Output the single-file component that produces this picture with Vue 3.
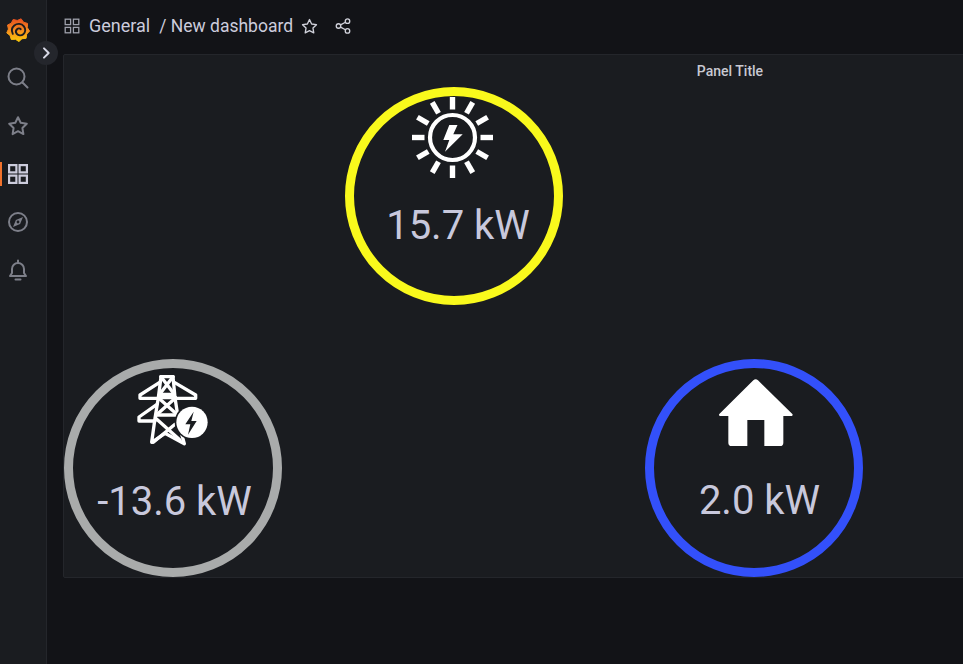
<template>
  <div class="app">
    <aside class="sidebar">
      <svg class="logo" viewBox="0 0 24 24" width="24" height="24">
        <defs>
          <linearGradient id="logoGrad" x1="0" y1="1" x2="0" y2="0">
            <stop offset="0" stop-color="#fbca0a" />
            <stop offset="0.55" stop-color="#f5851f" />
            <stop offset="1" stop-color="#e8501f" />
          </linearGradient>
        </defs>
        <polygon fill="url(#logoGrad)" stroke="url(#logoGrad)" stroke-width="1" stroke-linejoin="round" :points="logoPoints" />
        <path fill="none" stroke="#1d1c20" stroke-width="1.900" stroke-linecap="round" d="M6.800 15.800c-1.400-2.800-.9-6.300 1.500-8.300 2.900-2.500 7.300-2.100 9.600.8 2 2.500 1.700 6.100-.6 8-2 1.700-5 1.400-6.500-.5-1.200-1.500-1-3.600.4-4.800 1-.9 2.700-.8 3.500.2" />
      </svg>
      <nav class="nav">
        <button class="nav-item">
          <svg viewBox="0 0 24 24" width="24" height="24" fill="none" stroke="currentColor" stroke-width="2"><circle cx="10.500" cy="10.500" r="8" /><path d="m16.500 16.500 5 5" stroke-linecap="round" /></svg>
        </button>
        <button class="nav-item">
          <svg viewBox="0 0 24 24" width="24" height="24" fill="none" stroke="currentColor" stroke-width="2" stroke-linejoin="round"><path d="m12 3.200 2.700 5.600 6.100.9-4.400 4.300 1 6.100-5.400-2.900-5.400 2.900 1-6.100-4.400-4.300 6.100-.9z" /></svg>
        </button>
        <button class="nav-item active">
          <svg viewBox="0 0 24 24" width="24" height="24" fill="none" stroke="currentColor" stroke-width="2.200"><rect x="3.100" y="3.100" width="7.300" height="7.300" /><rect x="13.600" y="3.100" width="7.300" height="7.300" /><rect x="3.100" y="13.600" width="7.300" height="7.300" /><rect x="13.600" y="13.600" width="7.300" height="7.300" /></svg>
        </button>
        <button class="nav-item">
          <svg viewBox="0 0 24 24" width="24" height="24" fill="none" stroke="currentColor" stroke-width="2"><circle cx="12" cy="12" r="9" /><path fill="currentColor" stroke="none" d="m17 7-2.900 7.100L7 17l2.900-7.100zm-5 3.600a1.400 1.400 0 1 0 0 2.800 1.400 1.400 0 0 0 0-2.800z" fill-rule="evenodd" /></svg>
        </button>
        <button class="nav-item">
          <svg viewBox="0 0 24 24" width="24" height="24" fill="none" stroke="currentColor" stroke-width="2" stroke-linejoin="round" stroke-linecap="round"><path d="M6 15V11a6 6 0 0 1 12 0v4l2 3H4z" /><path d="M12 2.500V5M9.500 21.500h5" /></svg>
        </button>
      </nav>
    </aside>

    <button class="expand">
      <svg viewBox="0 0 24 24" width="16" height="16" fill="none" stroke="#d8d9e6" stroke-width="3" stroke-linecap="round" stroke-linejoin="round"><path d="m9 5 7 7-7 7" /></svg>
    </button>

    <main class="main">
      <header class="topbar">
        <svg class="crumb-icon" viewBox="0 0 16 16" width="16" height="16" fill="none" stroke="#9fa1ac" stroke-width="1.300"><rect x="1.200" y="1.200" width="5.400" height="5.400" /><rect x="9.400" y="1.200" width="5.400" height="5.400" /><rect x="1.200" y="9.400" width="5.400" height="5.400" /><rect x="9.400" y="9.400" width="5.400" height="5.400" /></svg>
        <span class="crumb">General</span>
        <span class="crumb crumb-last">/ New dashboard</span>
        <svg class="star" viewBox="0 0 24 24" width="19" height="19" fill="none" stroke="#d0d1da" stroke-width="1.700" stroke-linejoin="round"><path d="m12 3.200 2.700 5.600 6.100.9-4.400 4.300 1 6.100-5.400-2.900-5.400 2.900 1-6.100-4.400-4.300 6.100-.9z" /></svg>
        <svg class="share" viewBox="0 0 24 24" width="18" height="18" fill="none" stroke="#d0d1da" stroke-width="1.800"><circle cx="18" cy="5.500" r="3" /><circle cx="6" cy="12" r="3" /><circle cx="18" cy="18.500" r="3" /><path d="m8.700 10.500 6.600-3.500M8.700 13.500l6.600 3.500" /></svg>
      </header>

      <section class="panel">
        <h2 class="panel-title">Panel Title</h2>
        <div class="canvas">
          <div v-for="node in nodes" :key="node.id" class="node" :class="node.id">
            <svg v-if="node.id === 'sun'" class="node-icon" viewBox="0 0 81 81" width="81" height="81">
              <g stroke="#fff" stroke-width="5.400" fill="none">
                <circle cx="40.500" cy="40.500" r="22.500" stroke-width="4.200" />
                <path v-for="a in rays" :key="a" d="M40.500 0V12.500" :transform="`rotate(${a} 40.500 40.500)`" />
              </g>
              <path fill="#fff" d="M37.300 28h8.200l-4.200 9.300h9.400L33 54.700l4.300-11.700h-6z" />
            </svg>
            <svg v-else-if="node.id === 'grid'" class="node-icon" viewBox="0 0 285 270" width="95" height="90">
              <g fill="none" stroke="#fff" stroke-width="10" stroke-linejoin="round" stroke-linecap="round">
                <path d="M108 35h36M104 88h44M100 98h52M94 150h64" />
                <path d="M108 35 100 98 90 160 80 232 120 205 178 236 172 215 158 150 150 98 144 35" />
                <path d="M108 35 148 88M144 35 104 88M100 98 158 150M152 98 94 150M92 160 165 225M150 178 85 232" />
                <path d="M104 52 45 90V100H100M148 52 212 90V100H152M96 118 42 156V168H90" />
              </g>
              <circle cx="201" cy="172" r="52" fill="#1a1c20" />
              <circle cx="201" cy="172" r="47" fill="#fff" />
              <path fill="#1a1c20" d="M206 140 181 178h15l-7 31 26-41h-16l7-28z" />
            </svg>
            <svg v-else class="node-icon" viewBox="0 0 300 255" width="100" height="85">
              <path fill="#fff" d="M145 31a10 10 0 0 1 14 0L262 132c2 2 1 6-2 6H235V218a10 10 0 0 1-10 10H178V150H127V228H80a10 10 0 0 1-10-10V138H45c-3 0-4-4-2-6z" />
            </svg>
            <span class="value">{{ node.value }}</span>
          </div>
        </div>
      </section>
    </main>
  </div>
</template>

<script setup>
const nodes = [
  { id: 'sun', value: '15.7 kW' },
  { id: 'grid', value: '-13.6 kW' },
  { id: 'home', value: '2.0 kW' }
]

const rays = [0, 30, 60, 90, 120, 150, 180, 210, 240, 270, 300, 330]

// jagged outline of the logo
const logoPoints = Array.from({ length: 18 }, (_, i) => {
  const r = i % 2 ? 9.6 : 11.6
  const a = (i * Math.PI) / 9 - 1.3
  return `${(12 + r * Math.cos(a)).toFixed(2)},${(12 + r * Math.sin(a)).toFixed(2)}`
}).join(' ')
</script>

<style>
html,
body {
  margin: 0;
  background: #121317;
  overflow: hidden;
}
</style>

<style scoped>
.app {
  display: flex;
  width: 963px;
  height: 664px;
  overflow: hidden;
  position: relative;
  background: #121317;
  font-family: Roboto, "Liberation Sans", sans-serif;
}

.sidebar {
  flex: none;
  width: 46px;
  border-right: 1px solid #24262b;
  background: #1a1c20;
  padding-top: 18px;
  box-sizing: content-box;
}

.logo {
  display: block;
  margin-left: 6px;
}

.nav {
  margin-top: 12px;
  display: flex;
  flex-direction: column;
  width: 36px;
}

.nav-item {
  height: 48px;
  width: 100%;
  padding: 0;
  border: 0;
  background: none;
  color: #7d7f89;
  display: flex;
  align-items: center;
  justify-content: center;
}

.nav-item.active {
  color: #ccccdc;
  position: relative;
}

.nav-item.active::before {
  content: "";
  position: absolute;
  left: 0;
  top: 12px;
  width: 2px;
  height: 24px;
  background: #f2722c;
}

.expand {
  position: absolute;
  left: 34px;
  top: 41px;
  width: 24px;
  height: 24px;
  padding: 0;
  border: 0;
  border-radius: 50%;
  background: #24262c;
  display: flex;
  align-items: center;
  justify-content: center;
}

.main {
  flex: none;
  display: flex;
  flex-direction: column;
  padding-left: 16px;
}

.topbar {
  height: 54px;
  display: flex;
  align-items: center;
  padding-left: 1px;
  padding-bottom: 2px;
  box-sizing: border-box;
  color: #ccccdc;
}

.crumb-icon {
  margin-right: 9px;
}

.crumb {
  font-size: 18px;
  line-height: 24px;
  white-space: nowrap;
}

.crumb-last {
  margin-left: 9px;
  font-size: 17.5px;
}

.star {
  margin-left: 7px;
}

.share {
  margin-left: 15px;
}

.panel {
  width: 1334px;
  height: 524px;
  box-sizing: border-box;
  background: #1a1c20;
  border: 1px solid #24262b;
  border-radius: 2px;
  display: flex;
  flex-direction: column;
}

.panel-title {
  margin: 0;
  height: 32px;
  line-height: 32px;
  text-align: center;
  font-size: 14px;
  font-weight: 500;
  color: #c8c9d2;
}

.canvas {
  position: relative;
  flex: 1;
}

.node {
  position: absolute;
  width: 218px;
  height: 218px;
  box-sizing: border-box;
  border: 9px solid;
  border-radius: 50%;
}

.node.sun {
  left: 281px;
  top: 0;
  border-color: #f9f91c;
}

.node.grid {
  left: 0;
  top: 272px;
  border-color: #a9abab;
}

.node.home {
  left: 581px;
  top: 272px;
  border-color: #3350fa;
}

.node-icon {
  position: absolute;
}

.sun .node-icon {
  left: 58px;
  top: 1px;
}

.grid .node-icon {
  left: 52px;
  top: -3px;
}

.home .node-icon {
  left: 51px;
  top: 2px;
}

.value {
  position: absolute;
  left: 0;
  right: 0;
  top: 107px;
  text-align: center;
  font-size: 40px;
  line-height: 46px;
  color: #c8c8dc;
  white-space: nowrap;
}

.sun .value {
  left: 8px;
}

.grid .value {
  left: 3px;
  top: 111px;
}

.home .value {
  left: 11px;
  top: 110px;
}
</style>
